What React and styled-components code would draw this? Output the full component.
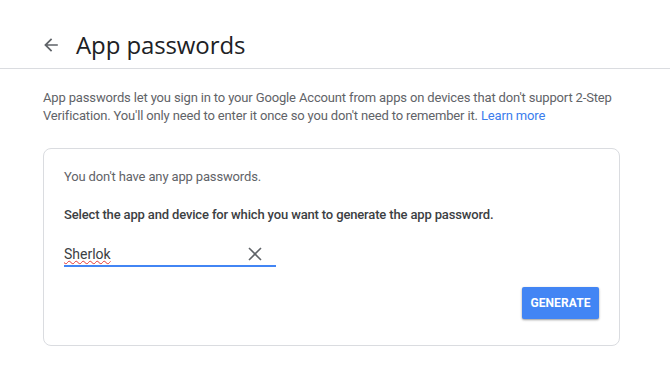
import React from "react";
import styled, { createGlobalStyle } from "styled-components";

const GlobalStyle = createGlobalStyle`
	body {
		margin: 0;
		background: #fff;
		font-family: Roboto, "Liberation Sans", Arial, sans-serif;
		color: #5f6368;
	}
`;

const Header = styled.header`
	display: flex;
	align-items: center;
	height: 69px;
	padding: 21px 0 0 39px;
	border-bottom: 1px solid #dadce0;
	box-sizing: border-box;
`;

const BackButton = styled.button`
	display: flex;
	align-items: center;
	justify-content: center;
	width: 24px;
	height: 24px;
	padding: 0;
	border: none;
	background: none;
	color: #5f6368;
	margin-right: 13px;
	cursor: pointer;
`;

const Title = styled.h1`
	margin: 0;
	font-family: "Open Sans", Roboto, sans-serif;
	font-size: 24px;
	font-weight: 400;
	color: #202124;
	letter-spacing: -0.1px;
`;

const Content = styled.main`
	padding: 20px 50px 0 43px;
`;

const Description = styled.p`
	margin: 0 0 23px;
	font-size: 13px;
	line-height: 18px;
	letter-spacing: -0.15px;
	color: #5f6368;
`;

const Link = styled.a`
	color: #3b7ded;
	text-decoration: none;
`;

const Card = styled.section`
	border: 1px solid #dadce0;
	border-radius: 8px;
	padding: 19px 20px 26px 20px;
	display: flex;
	flex-direction: column;
`;

const Line = styled.p`
	margin: 0 0 20px;
	font-size: 13px;
	line-height: 18px;
	letter-spacing: -0.15px;
	color: ${(p) => (p.strong ? "#3c4043" : "#5f6368")};
	font-weight: ${(p) => (p.strong ? 500 : 400)};
`;

const Field = styled.div`
	display: flex;
	align-items: center;
	justify-content: space-between;
	width: 212px;
	height: 25px;
	margin-top: -2px;
	border-bottom: 2px solid #4285f4;
	box-sizing: border-box;
	padding-right: 14px;
`;

const Value = styled.span`
	font-size: 14px;
	color: #3c4043;
	text-decoration: underline wavy #e53935;
	text-decoration-thickness: 1px;
	text-underline-offset: 1px;
`;

const Clear = styled.button`
	display: flex;
	padding: 0;
	border: none;
	background: none;
	color: #5f6368;
	cursor: pointer;
`;

const Actions = styled.div`
	display: flex;
	justify-content: flex-end;
	margin-top: 20px;
`;

const Generate = styled.button`
	height: 32px;
	width: 77px;
	border: none;
	border-radius: 2px;
	background: #4285f4;
	color: #fff;
	font-family: Roboto, sans-serif;
	font-size: 12px;
	font-weight: 700;
	letter-spacing: 0.1px;
	box-shadow: 0 1px 2px rgba(0, 0, 0, 0.3), 0 1px 3px rgba(0, 0, 0, 0.12);
	cursor: pointer;
`;

function App() {
	return (
		<>
			<GlobalStyle />
			<Header>
				<BackButton aria-label="Back">
					<svg width="24" height="24" viewBox="0 0 24 24" fill="currentColor">
						<path d="M20 11H7.83l5.59-5.59L12 4l-8 8 8 8 1.41-1.41L7.83 13H20v-2z" transform="translate(12 12) scale(0.85) translate(-12 -12)" />
					</svg>
				</BackButton>
				<Title>App passwords</Title>
			</Header>
			<Content>
				<Description>
					App passwords let you sign in to your Google Account from apps on devices that don't support 2-Step
					Verification. You'll only need to enter it once so you don't need to remember it.{" "}
					<Link href="#">Learn more</Link>
				</Description>
				<Card>
					<Line>You don't have any app passwords.</Line>
					<Line strong>Select the app and device for which you want to generate the app password.</Line>
					<Field>
						<Value>Sherlok</Value>
						<Clear aria-label="Clear">
							<svg width="14" height="14" viewBox="0 0 14 14" stroke="currentColor" strokeWidth="1.6" fill="none">
								<path d="M1 1l12 12M13 1L1 13" />
							</svg>
						</Clear>
					</Field>
					<Actions>
						<Generate>GENERATE</Generate>
					</Actions>
				</Card>
			</Content>
		</>
	);
}

export default App;
